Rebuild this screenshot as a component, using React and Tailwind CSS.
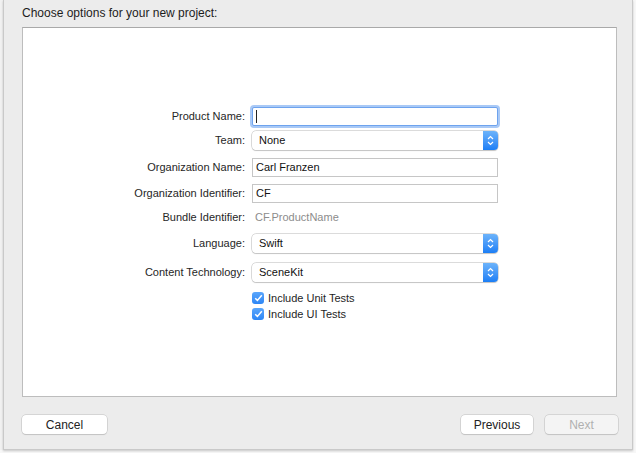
import React from "react";

const font = { fontFamily: '"Liberation Sans", Arial, sans-serif' };

const Label = ({ children }) => (
  <div className="w-[222px] text-right text-[11px] text-[#262626]">
    {children}
  </div>
);

const TextField = ({ value, focused }) => (
  <div
    className={
      focused
        ? "flex h-[19px] w-[246px] items-center bg-white px-[3px] text-[11px] text-[#111] border border-[#6ea3ee] shadow-[0_0_0_2px_#a9c9f6] rounded-[2px]"
        : "flex h-[19px] w-[246px] items-center bg-white px-[3px] text-[11px] text-[#111] border border-[#c6c6c6]"
    }
  >
    {focused ? <span className="h-[13px] w-px bg-[#222]" /> : value}
  </div>
);

const Popup = ({ value }) => (
  <div className="flex h-[19px] w-[246px] items-center overflow-hidden rounded-[4px] bg-white text-[11px] text-[#111] shadow-[0_0_0_0.5px_#b8b8b8,0_1px_1px_rgba(0,0,0,0.18)]">
    <div className="flex-1 pl-[7px]">{value}</div>
    <div className="flex h-full w-[15px] items-center justify-center bg-gradient-to-b from-[#6cb3fa] to-[#1a7ef5]">
      <svg width="7" height="11" viewBox="0 0 7 11" fill="none">
        <path d="M1 4 L3.5 1.5 L6 4" stroke="white" strokeWidth="1.2" />
        <path d="M1 7 L3.5 9.5 L6 7" stroke="white" strokeWidth="1.2" />
      </svg>
    </div>
  </div>
);

const Check = ({ label }) => (
  <div className="flex h-[14px] items-center gap-[4px] text-[11px] leading-[14px] text-[#1e1e1e]">
    <div className="flex h-[12px] w-[12px] items-center justify-center rounded-[3px] bg-gradient-to-b from-[#5aa6fb] to-[#2c86f6]">
      <svg width="9" height="8" viewBox="0 0 9 8" fill="none">
        <path d="M1.2 4.2 L3.4 6.4 L7.8 1.2" stroke="white" strokeWidth="1.5" />
      </svg>
    </div>
    <span>{label}</span>
  </div>
);

const Button = ({ children, disabled, width }) => (
  <div
    className={`flex h-[19px] ${width} items-center justify-center rounded-[4px] text-[12px] shadow-[0_0_0_0.5px_#bdbdbd,0_1px_1px_rgba(0,0,0,0.15)] ${
      disabled ? "bg-[#f4f4f4] text-[#b0b0b0]" : "bg-white text-[#222]"
    }`}
  >
    {children}
  </div>
);

export default function App() {
  return (
    <div style={font} className="flex h-[453px] w-[636px] overflow-hidden bg-[#f7f7f7]">
      <div className="w-[3px] h-[450px] bg-[#f1f1f1]" />
      <div className="flex h-[450px] w-[630px] flex-col border-l border-r border-b border-[#c9c9c9] bg-[#ececec] shadow-[0_1px_2px_rgba(0,0,0,0.2)]">
        <div className="pl-[18px] pt-[5px] text-[12px] leading-[16px] text-[#1c1c1c]">
          Choose options for your new project:
        </div>
        <div className="ml-[18px] mt-[6px] h-[370px] w-[595px] border border-[#bdbdbd] border-t-[#a9a9a9] bg-white pt-[79px]">
          <div className="flex items-center gap-[7px]">
            <Label>Product Name:</Label>
            <TextField focused />
          </div>
          <div className="mt-[5px] flex items-center gap-[7px]">
            <Label>Team:</Label>
            <Popup value="None" />
          </div>
          <div className="mt-[8px] flex items-center gap-[7px]">
            <Label>Organization Name:</Label>
            <TextField value="Carl Franzen" />
          </div>
          <div className="mt-[7px] flex items-center gap-[7px]">
            <Label>Organization Identifier:</Label>
            <TextField value="CF" />
          </div>
          <div className="mt-[5px] flex h-[19px] items-center gap-[7px]">
            <Label>Bundle Identifier:</Label>
            <div className="pl-[3px] text-[11px] text-[#8c8c8c]">CF.ProductName</div>
          </div>
          <div className="mt-[7px] flex items-center gap-[7px]">
            <Label>Language:</Label>
            <Popup value="Swift" />
          </div>
          <div className="mt-[10px] flex items-center gap-[7px]">
            <Label>Content Technology:</Label>
            <Popup value="SceneKit" />
          </div>
          <div className="mt-[9px] ml-[229px] flex flex-col gap-[2px]">
            <Check label="Include Unit Tests" />
            <Check label="Include UI Tests" />
          </div>
        </div>
        <div className="mt-[18px] flex items-center pl-[18px] pr-[14px]">
          <Button width="w-[85px]">Cancel</Button>
          <div className="flex-1" />
          <Button width="w-[72px]">Previous</Button>
          <div className="w-[12px]" />
          <Button width="w-[73px]" disabled>
            Next
          </Button>
        </div>
      </div>
    </div>
  );
}
